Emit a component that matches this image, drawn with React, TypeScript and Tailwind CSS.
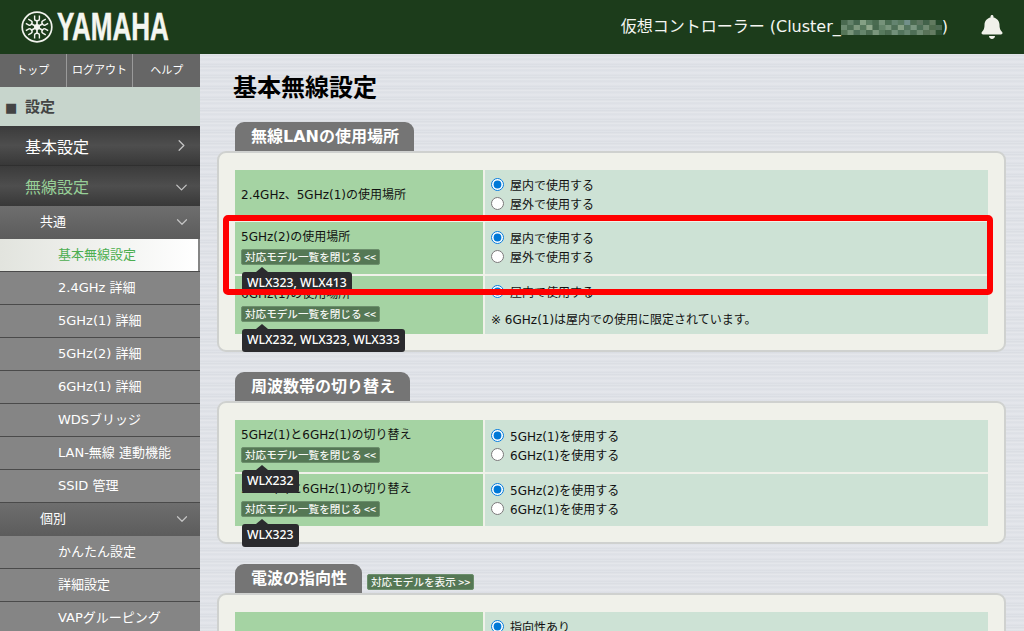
import React from 'react';
import { ChevronRight, ChevronDown } from 'lucide-react';
import { FaBell } from 'react-icons/fa';

const mosaic = [
  ['#4a6a50', '#64826a', '#476850', '#84a084', '#5b7d62', '#4a6b50', '#76927a', '#4c6e54', '#648470', '#587a60', '#72908a', '#4d6c52', '#5d7560', '#42624a', '#627a60', '#24472a'],
  ['#6c8a70', '#4d6e54', '#7e987e', '#56785c', '#90a88c', '#47684e', '#64846a', '#7a967e', '#4f7058', '#86a086', '#557660', '#7a9680', '#4c6e56', '#708a72', '#4f6b4e', '#4f6b54'],
  ['#567658', '#78947a', '#50705a', '#66866c', '#4c6c52', '#7a967c', '#587a5e', '#4c6c52', '#72907a', '#52745c', '#668670', '#4e6e56', '#6e8a72', '#587258', '#647c62', '#2c4e30'],
];

const Logo = () => (
  <div className="flex items-center w-[148px] h-[54px] ml-[21px]">
    <svg width="32" height="32" viewBox="0 0 32 32" className="shrink-0" fill="none" stroke="#f2f4ee">
      <circle cx="16" cy="16" r="14.8" strokeWidth="1.7" />
      {[0, 60, 120, 180, 240, 300].map((a) => (
        <g key={a} transform={`rotate(${a} 16 16)`}>
          <path d="M16 16V9" strokeWidth="1.7" />
          <path d="M13.6 4.5V8Q13.6 9.8 16 9.8Q18.4 9.8 18.4 8V4.5" strokeWidth="1.4" />
        </g>
      ))}
      <circle cx="16" cy="16" r="3" fill="#f2f4ee" stroke="none" />
    </svg>
    <span className="ml-[4px] text-[38px] leading-none font-bold text-[#f4f6f0] origin-left scale-x-[0.685] whitespace-nowrap [-webkit-text-stroke:0.5px_#f4f6f0] font-['Liberation_Sans',sans-serif]">
      YAMAHA
    </span>
  </div>
);

const Header = () => (
  <header className="h-[54px] bg-[#1c3c1b] flex items-center justify-between text-white">
    <Logo />
    <div className="flex items-center">
      <div className="flex items-center text-[16px] text-[#f4f6f2]">
        <span>仮想コントローラー (Cluster_</span>
        <svg width="101" height="15" viewBox="0 0 16 3" preserveAspectRatio="none" className="block">
          {mosaic.map((row, y) =>
            row.map((c, x) => <rect key={`${x}-${y}`} x={x} y={y} width="1.05" height="1.05" fill={c} />),
          )}
        </svg>
        <span>)</span>
      </div>
      <FaBell size={24} className="ml-[32px] mr-[20px] text-[#f0f1ea]" />
    </div>
  </header>
);

const SubItem = ({ label, active }: { label: string; active?: boolean }) =>
  active ? (
    <div className="h-[33px] border-b border-[#4a4a4a] bg-[#858585] pr-[2px]">
      <div className="h-full pl-[58px] flex items-center text-[13px] text-[#4cae50] bg-gradient-to-r from-[#e2e4de] to-white">
        {label}
      </div>
    </div>
  ) : (
    <div className="h-[33px] border-b border-[#4a4a4a] bg-[#858585] pl-[58px] flex items-center text-[13px] text-white">
      {label}
    </div>
  );

const SubGroup = ({ label }: { label: string }) => (
  <div className="h-[33px] pb-[2px] pl-[40px] pr-[9px] flex items-center justify-between text-[13px] text-white bg-gradient-to-b from-[#6e6e6e] to-[#5c5c5c]">
    {label}
    <ChevronDown size={18} strokeWidth={1.6} className="text-[#c4c4c4]" />
  </div>
);

const Sidebar = () => (
  <aside className="w-[200px] shrink-0 bg-[#858585]">
    <div className="h-[33px] pb-0 bg-[#666666] grid grid-cols-3 text-[11px] text-white">
      <div className="flex items-center justify-center pt-[2px] border-r border-[#9a9a9a]">トップ</div>
      <div className="flex items-center justify-center pt-[2px] border-r border-[#9a9a9a]">ログアウト</div>
      <div className="flex items-center justify-center pt-[2px]">ヘルプ</div>
    </div>
    <div className="h-[39px] pt-[2px] bg-[#c7d5cc] flex items-center pl-[5px] text-[15px] font-bold text-[#444444]">
      <span className="text-[13px] w-[20px]">■</span>
      設定
    </div>
    <div className="h-[40px] pl-[25px] pr-[9px] flex items-center justify-between text-[16px] text-white border-b border-[#2f2f2f] bg-gradient-to-b from-[#3b3b3b] via-[#4e4e4e] to-[#383838]">
      <span className="pt-[4px]">基本設定</span>
      <ChevronRight size={19} strokeWidth={1.6} className="text-[#c4c4c4]" />
    </div>
    <div className="h-[40px] pt-[2px] pl-[25px] pr-[9px] flex items-center justify-between text-[16px] text-[#97cf97] bg-gradient-to-b from-[#3b3b3b] via-[#4e4e4e] to-[#383838]">
      <span className="pt-[2px]">無線設定</span>
      <ChevronDown size={19} strokeWidth={1.6} className="text-[#c4c4c4]" />
    </div>
    <SubGroup label="共通" />
    <SubItem label="基本無線設定" active />
    <SubItem label="2.4GHz 詳細" />
    <SubItem label="5GHz(1) 詳細" />
    <SubItem label="5GHz(2) 詳細" />
    <SubItem label="6GHz(1) 詳細" />
    <SubItem label="WDSブリッジ" />
    <SubItem label="LAN-無線 連動機能" />
    <SubItem label="SSID 管理" />
    <SubGroup label="個別" />
    <SubItem label="かんたん設定" />
    <SubItem label="詳細設定" />
    <SubItem label="VAPグルーピング" />
  </aside>
);

const ModelButton = ({ label }: { label: string }) => (
  <span className="inline-flex items-center h-[16px] px-[3px] rounded-[2px] bg-[#557855] border border-[#6c8f6c] text-[10.6px] leading-none font-medium text-[#f4f6f2] whitespace-nowrap font-['Noto_Sans_CJK_JP',sans-serif]">
    {label}
  </span>
);

const Tooltip = ({ models }: { models: string }) => (
  <div className="absolute left-[1px] top-[24px] z-10 h-[23px] px-[5px] flex items-center rounded-[3px] bg-[#2b2b2e] text-[12.25px] font-medium text-white whitespace-nowrap font-['Noto_Sans',sans-serif]">
    <span className="absolute left-[14px] -top-[5px] w-0 h-0 border-x-[6px] border-x-transparent border-b-[5px] border-b-[#2b2b2e]" />
    {models}
  </div>
);

type RowProps = {
  label: string;
  models?: string;
  height: string;
  labelPad: string;
  rightPad: string;
  children: React.ReactNode;
};

const Row = ({ label, models, height, labelPad, rightPad, children }: RowProps) => (
  <div className={`grid grid-cols-[248px_503px] gap-x-[2px] text-[12px] text-[#111111] ${height}`}>
    <div className={`bg-[#a5d3a3] pl-[6px] ${labelPad}`}>
      <div className="leading-[18px]">{label}</div>
      {models && (
        <div className="relative mt-[2px] h-[16px]">
          <ModelButton label="対応モデル一覧を閉じる <<" />
          <Tooltip models={models} />
        </div>
      )}
    </div>
    <div className={`bg-[#cde2d5] pl-[6px] ${rightPad}`}>{children}</div>
  </div>
);

const Radio = ({ name, label, checked }: { name: string; label: string; checked?: boolean }) => (
  <label className="flex items-center h-[19px] gap-[6px]">
    <input type="radio" name={name} defaultChecked={checked} className="w-[13px] h-[13px] m-0 accent-[#0078d7]" />
    <span className="pt-[3px]">{label}</span>
  </label>
);

const SectionTab = ({ title, button }: { title: string; button?: string }) => (
  <div className="flex items-end ml-[18px] mt-[20px]">
    <h2 className="h-[29px] pl-[16px] pr-[15px] flex items-center rounded-t-[9px] bg-[#757575] text-[16px] font-bold text-white">
      {title}
    </h2>
    {button && (
      <div className="ml-[5px] mb-[3px] flex">
        <ModelButton label={button} />
      </div>
    )}
  </div>
);

const Card = ({ children }: { children: React.ReactNode }) => (
  <div className="w-[789px] border-2 border-[#cfd1cf] rounded-[9px] bg-[#f0f1ea] pt-[17px] pb-[16px] pl-[16px] flex flex-col gap-y-[2px]">
    {children}
  </div>
);

const App: React.FC = () => {
  return (
    <div className="relative w-[1024px] h-[631px] overflow-hidden font-['DejaVu_Sans','Noto_Sans_CJK_JP',sans-serif]">
      <Header />
      <div className="flex h-[577px]">
        <Sidebar />
        <main className="flex-1 pl-[17px] bg-[repeating-linear-gradient(180deg,#e3e6eb_0px,#d8dbe1_2px,#e7e9ed_3px,#dcdfe5_5px,#e5e7ec_8px,#dadde3_11px)]">
          <h1 className="ml-[16px] mt-[18px] h-[30px] pt-[2px] flex items-center text-[24px] leading-none font-bold text-black">
            基本無線設定
          </h1>

          <SectionTab title="無線LANの使用場所" />
          <Card>
            <Row label="2.4GHz、5GHz(1)の使用場所" height="h-[50px]" labelPad="flex items-center" rightPad="pt-[5px]">
              <Radio name="place1" label="屋内で使用する" checked />
              <Radio name="place1" label="屋外で使用する" />
            </Row>
            <Row label="5GHz(2)の使用場所" models="WLX323, WLX413" height="h-[52px]" labelPad="pt-[6px]" rightPad="pt-[6px]">
              <Radio name="place2" label="屋内で使用する" checked />
              <Radio name="place2" label="屋外で使用する" />
            </Row>
            <Row label="6GHz(1)の使用場所" models="WLX232, WLX323, WLX333" height="h-[58px]" labelPad="pt-[9px]" rightPad="pt-[6px]">
              <Radio name="place3" label="屋内で使用する" checked />
              <p className="mt-[10px] leading-[19px]">※ 6GHz(1)は屋内での使用に限定されています。</p>
            </Row>
          </Card>

          <SectionTab title="周波数帯の切り替え" />
          <Card>
            <Row label="5GHz(1)と6GHz(1)の切り替え" models="WLX232" height="h-[52px]" labelPad="pt-[6px]" rightPad="pt-[6px]">
              <Radio name="band1" label="5GHz(1)を使用する" checked />
              <Radio name="band1" label="6GHz(1)を使用する" />
            </Row>
            <Row label="5GHz(2)と6GHz(1)の切り替え" models="WLX323" height="h-[52px]" labelPad="pt-[6px]" rightPad="pt-[6px]">
              <Radio name="band2" label="5GHz(2)を使用する" checked />
              <Radio name="band2" label="6GHz(1)を使用する" />
            </Row>
          </Card>

          <SectionTab title="電波の指向性" button="対応モデルを表示 >>" />
          <Card>
            <Row label="" height="h-[52px]" labelPad="" rightPad="pt-[5px]">
              <Radio name="dir" label="指向性あり" checked />
            </Row>
          </Card>
        </main>
      </div>

      {/* red callout over the 5GHz(2) row */}
      <div className="absolute left-[223px] top-[215px] w-[770px] h-[80px] border-[6px] border-[#ff0000] rounded-[5px] z-20 pointer-events-none" />
    </div>
  );
};

export default App;
